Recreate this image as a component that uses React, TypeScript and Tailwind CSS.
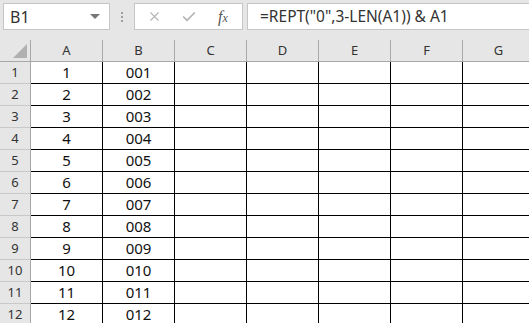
import { X, Check } from "lucide-react";

const cols = ["A", "B", "C", "D", "E", "F", "G"];
const rows = Array.from({ length: 12 }, (_, i) => i + 1);

const font = { fontFamily: '"Noto Sans", "Liberation Sans", sans-serif' };

export default function App() {
  return (
    <div className="w-[529px] h-[323px] overflow-hidden bg-[#e6e6e6] text-[#222]" style={font}>
      {/* formula bar */}
      <div className="flex items-center h-[40px] pt-[3px] pb-[10px] pl-[3px]">
        <div className="flex items-center justify-between w-[107px] h-[27px] bg-white border border-[#c6c6c6] pl-[6px] pr-[9px]">
          <span className="text-[16px] text-[#333]">B1</span>
          <span className="w-0 h-0 border-l-[5px] border-r-[5px] border-t-[5px] border-l-transparent border-r-transparent border-t-[#777]" />
        </div>
        <div className="flex flex-col items-center justify-center gap-[2px] w-[24px] h-[27px]">
          <span className="w-[2px] h-[2px] bg-[#a0a0a0]" />
          <span className="w-[2px] h-[2px] bg-[#a0a0a0]" />
          <span className="w-[2px] h-[2px] bg-[#a0a0a0]" />
        </div>
        <div className="flex items-center w-[109px] h-[27px] bg-white border border-[#c6c6c6]">
          <X className="ml-[12px] w-[15px] h-[15px] text-[#b4b4b4]" strokeWidth={1.8} />
          <Check className="ml-[19px] w-[16px] h-[16px] text-[#b4b4b4]" strokeWidth={2.5} />
          <span
            className="ml-[21px] text-[16px] italic text-[#555]"
            style={{ fontFamily: '"Liberation Serif", serif' }}
          >
            f<span className="text-[12px]">x</span>
          </span>
        </div>
        <div className="flex items-center flex-1 h-[27px] ml-[4px] bg-white border border-r-0 border-[#c6c6c6] pl-[12px]">
          <span className="text-[15.5px] text-[#333] whitespace-nowrap">=REPT("0",3-LEN(A1)) &amp; A1</span>
        </div>
      </div>

      {/* sheet */}
      <div className="grid grid-cols-[31px_repeat(7,72px)] grid-rows-[22px_repeat(12,22px)]">
        <div className="flex items-end justify-end pr-[3px] pb-[3px] border-r border-b border-[#a8a8a8] bg-[#e6e6e6]">
          <svg width="14" height="14" viewBox="0 0 14 14" className="block shrink-0">
            <path d="M14 0 L14 14 L0 14 Z" fill="#b0b0b0" />
          </svg>
        </div>
        {cols.map((c) => (
          <div
            key={c}
            className="flex items-center justify-center border-r border-b border-[#a8a8a8] bg-[#e6e6e6] text-[13px] text-[#333]"
          >
            {c}
          </div>
        ))}
        {rows.map((r) => (
          <div key={r} className="contents">
            <div className="flex items-center justify-center border-r border-b border-r-[#a8a8a8] border-b-[#c8c8c8] bg-[#e6e6e6] text-[13px] text-[#333]">
              {r}
            </div>
            {cols.map((c) => (
              <div
                key={c}
                className="flex items-center justify-center bg-white border-r border-b border-black text-[15px] text-[#111]"
              >
                {c === "A" ? r : c === "B" ? String(r).padStart(3, "0") : ""}
              </div>
            ))}
          </div>
        ))}
      </div>
    </div>
  );
}
